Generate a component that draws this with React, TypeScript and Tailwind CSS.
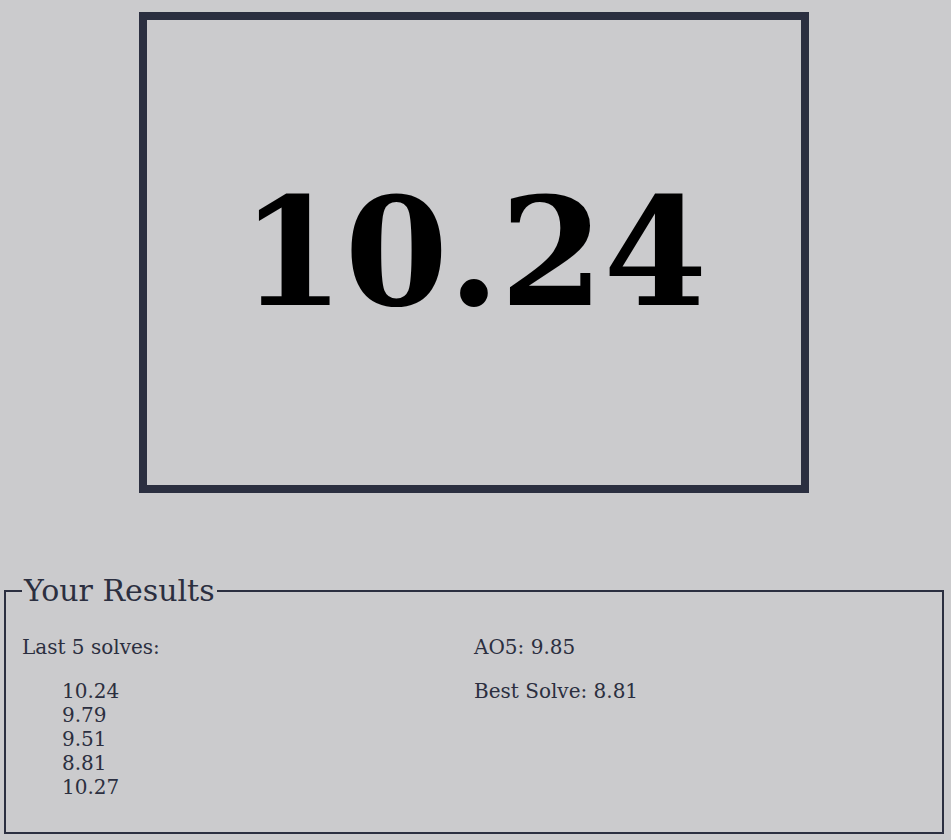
import React from "react";

const solves = ["10.24", "9.79", "9.51", "8.81", "10.27"];

const App = () => {
  const best = "8.81";
  const ao5 = "9.85";

  return (
    <div className="min-h-screen bg-[#cbcbcd] pt-3 font-['DejaVu_Serif',serif] text-[#2b2f40]">
      {/* Timer display */}
      <div className="ml-[139px] flex h-[481px] w-[670px] items-center justify-center border-8 border-[#2b2f40]">
        <span className="text-[149px] font-bold leading-none text-black">
          10.24
        </span>
      </div>

      {/* Results */}
      <fieldset className="ml-1 mt-[75px] w-[940px] border-2 border-[#2b2f40] px-4 pb-[33px]">
        <legend className="px-0.5 text-[30px]">Your Results</legend>
        <div className="mt-[22px] grid grid-cols-2 text-[20px] leading-6">
          <div>
            <p>Last 5 solves:</p>
            <ul className="mt-5 pl-10">
              {solves.map((s, i) => (
                <li key={i}>{s}</li>
              ))}
            </ul>
          </div>
          <div>
            <p>AO5: {ao5}</p>
            <p className="mt-5">Best Solve: {best}</p>
          </div>
        </div>
      </fieldset>
    </div>
  );
};

export default App;
